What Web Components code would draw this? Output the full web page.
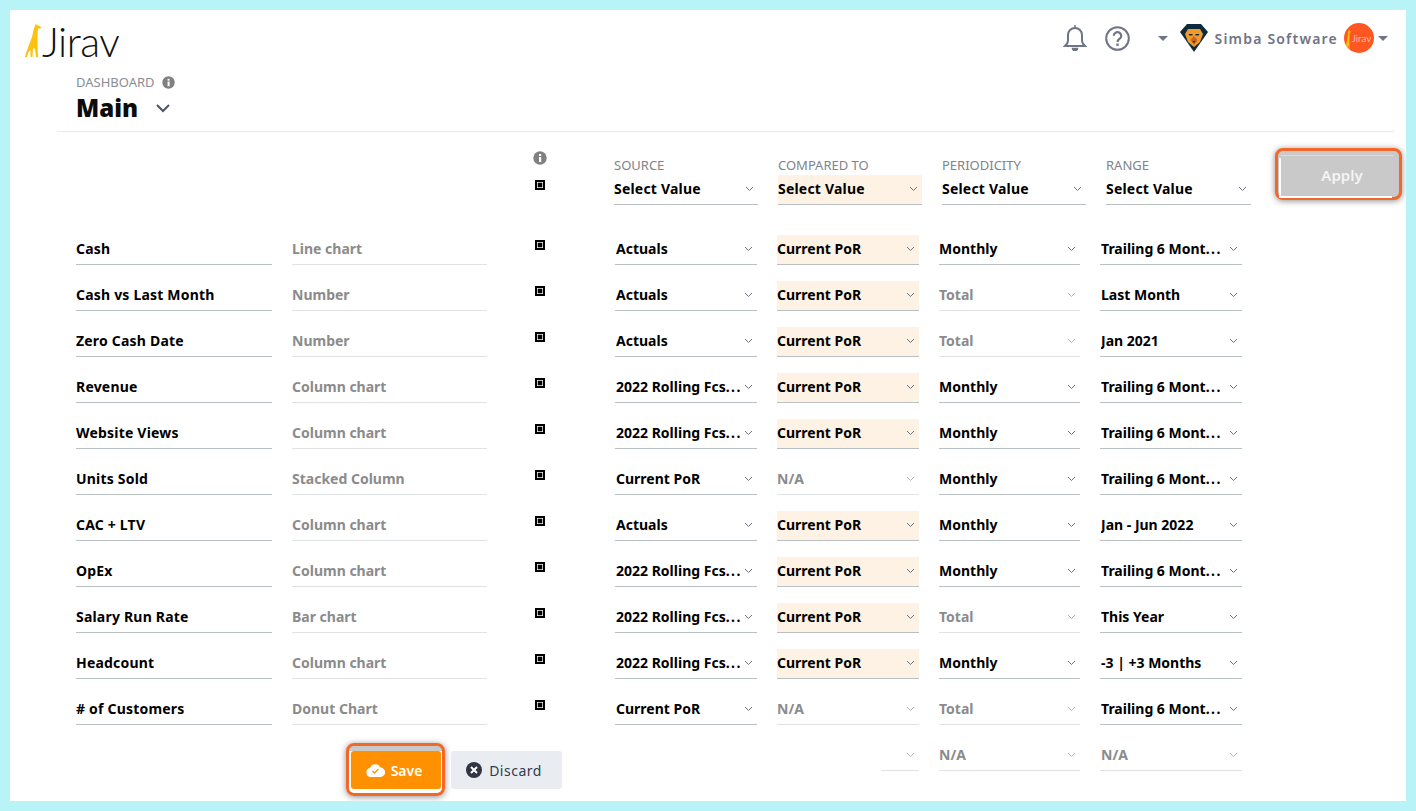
<!DOCTYPE html>
<html lang="en">
<head>
<meta charset="utf-8">
<title>Jirav Dashboard</title>
<style>
	html, body { margin: 0; padding: 0; background: #b8f3f7; }
	body { font-family: "Noto Sans", "Open Sans", sans-serif; height: 811px; overflow: hidden; }
</style>
</head>
<body>
<dash-app></dash-app>
<script>
const CHEVRON = `<svg width="9" height="6" viewBox="0 0 9 6" fill="none" stroke="currentColor" stroke-width="1"><path d="M1 1l3.5 3.5L8 1"/></svg>`;
const INFO = `<svg width="14" height="14" viewBox="0 0 14 14"><circle cx="7" cy="7" r="6.7" fill="#808080"/><rect x="6" y="6" width="2.2" height="5" fill="#fff"/><rect x="6" y="3" width="2.2" height="2" fill="#fff"/></svg>`;
const GIRAFFE = `M9 5l1-2V.5l1 2 1-2 .5 2H14l2.500 2-1 1H13l-.5 6.500V22l.5 12h-2l-1-8-2-1-.5 9h-2v-7L3 30l-1 4H0l1-4 3-8 3-8z`;

class DashCheck extends HTMLElement {
	constructor() {
		super();
		this.attachShadow({ mode: 'open' });
		this.shadowRoot.innerHTML = `
			<style>
				:host { display: block; width: 10px; height: 10px; }
				svg { display: block; }
			</style>
			<svg width="10" height="10" viewBox="0 0 10 10"><rect x="1" y="1" width="8" height="8" fill="#fff" stroke="#000" stroke-width="2"/><rect x="2.700" y="2.700" width="4.600" height="4.600" fill="#000"/></svg>`;
	}
}

class DashSelect extends HTMLElement {
	constructor() {
		super();
		this.attachShadow({ mode: 'open' });
	}

	connectedCallback() {
		this.shadowRoot.innerHTML = `
			<style>
				:host { display: flex; align-items: center; box-sizing: border-box; height: 30px; padding: 0 4px 2px 1px; border-bottom: 1px solid #b9c0c4; color: #000; font-size: 14px; font-weight: 700; }
				:host([tinted]) { background: #fdf2e4; padding-left: 0; }
				:host([disabled]) { color: #8b8b8b; border-bottom-color: #dfe3e5; }
				:host([flush]) { padding-left: 0; }
				span { flex: 1; white-space: nowrap; overflow: hidden; }
				svg { flex: none; color: #6b7280; }
				:host([disabled]) svg { color: #b5b8bb; }
			</style>
			<span><slot></slot></span>${CHEVRON}`;
	}
}

class DashField extends HTMLElement {
	constructor() {
		super();
		this.attachShadow({ mode: 'open' });
		this.shadowRoot.innerHTML = `
			<style>
				:host { display: flex; align-items: center; box-sizing: border-box; height: 30px; padding-bottom: 2px; border-bottom: 1px solid #b9c0c4; color: #000; font-size: 14px; font-weight: 700; letter-spacing: .2px; }
				:host([muted]) { color: #8b8b8b; border-bottom-color: #dfe3e5; letter-spacing: 0; }
			</style>
			<slot></slot>`;
	}
}

class DashRing extends HTMLElement {
	constructor() {
		super();
		this.attachShadow({ mode: 'open' });
		this.shadowRoot.innerHTML = `
			<style>
				:host { display: block; box-sizing: border-box; border: 3px solid #f2682a; border-radius: 8px; background: linear-gradient(#c9c9c9 0, #c9c9c9 5px, #fff 5px); box-shadow: 0 1px 6px rgba(0,0,0,.45); }
				:host([grey]) { background: #c9c9c9; }
			</style>
			<slot></slot>`;
	}
}

class DashButton extends HTMLElement {
	constructor() {
		super();
		this.attachShadow({ mode: 'open' });
		this.shadowRoot.innerHTML = `
			<style>
				:host { display: flex; align-items: center; justify-content: center; gap: 7px; box-sizing: border-box; height: 38px; border-radius: 3px; font-size: 14px; letter-spacing: .5px; background: #e9ecf0; color: #343a4e; }
				:host([variant="save"]) { background: #ff9100; color: #fff; font-weight: 600; width: 90px; gap: 6px; letter-spacing: 0; padding-right: 4px; }
				:host([variant="apply"]) { background: #c9c9c9; color: #f4f4f4; font-weight: 600; font-size: 15px; height: 40px; width: 113px; letter-spacing: 0; padding: 0 0 2px 9px; border-radius: 0; box-shadow: 0 -1px 0 #dcdcdc, -2px 2px 0 #fff; }
				:host([variant="discard"]) { width: 111px; padding-right: 5px; }
			</style>
			<slot name="icon"></slot><slot></slot>`;
	}
}

class DashTopbar extends HTMLElement {
	constructor() {
		super();
		this.attachShadow({ mode: 'open' });
		this.shadowRoot.innerHTML = `
			<style>
				:host { display: flex; align-items: flex-start; justify-content: space-between; height: 60px; padding: 0 18px 0 15px; box-sizing: border-box; }
				.logo { display: flex; align-items: flex-start; margin-top: 12px; }
				.logo svg { display: block; margin-top: 1px; }
				.logo span { font-family: Lato, sans-serif; font-weight: 300; font-size: 41px; line-height: 40px; color: #111; letter-spacing: -.5px; }
				.right { display: flex; align-items: center; height: 30px; margin-top: 13px; color: #6f7486; }
				.bell { margin-right: 18px; }
				.help { margin-right: 28px; }
				.caret { width: 0; height: 0; border-left: 5px solid transparent; border-right: 5px solid transparent; border-top: 5px solid #6f7486; }
				.lion { margin: 0 6px 0 12px; }
				.name { font-size: 14px; font-weight: 600; letter-spacing: 1.2px; white-space: nowrap; margin-right: 6px; }
				.avatar { display: flex; align-items: center; justify-content: center; width: 30px; height: 30px; border-radius: 50%; background: #ff5722; color: #ffe9e0; font-family: Lato, sans-serif; font-size: 10px; font-weight: 300; overflow: hidden; margin-right: 4px; }
				.avatar svg { margin: 4px 1px 0 -2px; }
			</style>
			<div class="logo">
				<svg width="17" height="34" viewBox="0 0 17 34" fill="#fdc20e"><path d="${GIRAFFE}"/></svg>
				<span>Jirav</span>
			</div>
			<div class="right">
				<svg class="bell" width="24" height="26" viewBox="0 0 24 26" fill="none" stroke="currentColor" stroke-width="2"><path d="M2 21h20c-2-2-3-3-3-5v-6a7 7 0 0 0-14 0v6c0 2-1 3-3 5z"/><path d="M12 0v3M9.500 23.500a2.500 2 0 0 0 5 0z" fill="currentColor" stroke-width="1.500"/></svg>
				<svg class="help" width="25" height="25" viewBox="0 0 25 25" fill="none" stroke="currentColor" stroke-width="2"><circle cx="12.500" cy="12.500" r="11.300"/><path d="M8.800 9.800a3.700 3.700 0 1 1 5.700 3.100c-1.400.9-2 1.500-2 3" stroke-width="2.200"/><rect x="11.300" y="17.500" width="2.400" height="2.400" fill="currentColor" stroke="none"/></svg>
				<div class="caret"></div>
				<svg class="lion" width="28" height="28" viewBox="0 0 28 28"><path d="M7 0h14l7 8-14 20L0 8z" fill="#0f2b3a"/><path d="M8 5h12l3 5-3 8-6 5-6-5-3-8z" fill="#f09a2e"/><path d="M14 12l-3.500 4 3.500 5 3.500-5z" fill="#c9661d"/><path d="M8.500 10h4v1.500h-3zM15.500 10h4l-1 1.500h-3z" fill="#0f2b3a"/><path d="M12.500 17h3L14 19z" fill="#0f2b3a"/></svg>
				<span class="name">Simba Software</span>
				<div class="avatar"><svg width="6" height="22" viewBox="0 0 17 34" fill="#fdc20e" preserveAspectRatio="none"><path d="${GIRAFFE}"/></svg>Jirav</div>
				<div class="caret"></div>
			</div>`;
	}
}

class DashTitle extends HTMLElement {
	constructor() {
		super();
		this.attachShadow({ mode: 'open' });
		this.shadowRoot.innerHTML = `
			<style>
				:host { display: block; margin-left: 47px; margin-right: 12px; padding: 3px 0 8px 19px; border-bottom: 1px solid #e9e9e9; }
				.eyebrow { display: flex; align-items: center; gap: 7px; height: 18px; font-size: 13px; color: #8a8d93; }
				.eyebrow svg { display: block; width: 13px; height: 13px; }
				.main { display: flex; align-items: center; height: 32px; gap: 18px; font-size: 24px; font-weight: 900; color: #0c0c0c; }
				.main svg { color: #4b5563; margin-top: 2px; }
			</style>
			<div class="eyebrow">DASHBOARD ${INFO}</div>
			<div class="main">Main <svg width="14" height="9" viewBox="0 0 14 9" fill="none" stroke="currentColor" stroke-width="2"><path d="M1 1l6 6 6-6"/></svg></div>`;
	}
}

class DashFilters extends HTMLElement {
	constructor() {
		super();
		this.attachShadow({ mode: 'open' });
		const col = (label, tinted) => `
			<div class="col">
				<div class="label">${label}</div>
				<dash-select flush ${tinted ? 'tinted' : ''}>Select Value</dash-select>
			</div>`;
		this.shadowRoot.innerHTML = `
			<style>
				:host { display: grid; grid-template-columns: 437px 14px 27px 144px 144px 144px 145px 131px; column-gap: 20px; align-items: start; padding: 16px 0 30px 66px; }
				.flag { display: flex; flex-direction: column; align-items: center; gap: 15px; margin-top: 3px; }
				.flag svg { display: block; }
				.col { margin-top: 8px; letter-spacing: .2px; }
				.label { height: 19px; line-height: 19px; font-size: 13px; color: #7f838a; letter-spacing: 0; }
				dash-ring { margin-left: 4px; width: 127px; height: 52px; padding: 5px 5px 0 3px; }
			</style>
			<div></div>
			<div class="flag">${INFO}<dash-check></dash-check></div>
			<div></div>
			${col('SOURCE')}${col('COMPARED TO', true)}${col('PERIODICITY')}${col('RANGE')}
			<dash-ring grey><dash-button variant="apply">Apply</dash-button></dash-ring>`;
	}
}

class DashRow extends HTMLElement {
	constructor() {
		super();
		this.attachShadow({ mode: 'open' });
		this.shadowRoot.innerHTML = `
			<style>
				:host { display: grid; grid-template-columns: 196px 195px 88px 142px 142px 141px 142px; column-gap: 20px; height: 30px; }
				::slotted(*) { min-width: 0; }
			</style>
			<slot></slot>`;
	}
}

class DashTable extends HTMLElement {
	constructor() {
		super();
		this.attachShadow({ mode: 'open' });
	}

	connectedCallback() {
		const rows = [
			['Cash', 'Line chart', 'Actuals', 'Current PoR', 'Monthly', 'Trailing 6 Mont...'],
			['Cash vs Last Month', 'Number', 'Actuals', 'Current PoR', '-Total', 'Last Month'],
			['Zero Cash Date', 'Number', 'Actuals', 'Current PoR', '-Total', 'Jan 2021'],
			['Revenue', 'Column chart', '2022 Rolling Fcs...', 'Current PoR', 'Monthly', 'Trailing 6 Mont...'],
			['Website Views', 'Column chart', '2022 Rolling Fcs...', 'Current PoR', 'Monthly', 'Trailing 6 Mont...'],
			['Units Sold', 'Stacked Column', 'Current PoR', '-N/A', 'Monthly', 'Trailing 6 Mont...'],
			['CAC + LTV', 'Column chart', 'Actuals', 'Current PoR', 'Monthly', 'Jan - Jun 2022'],
			['OpEx', 'Column chart', '2022 Rolling Fcs...', 'Current PoR', 'Monthly', 'Trailing 6 Mont...'],
			['Salary Run Rate', 'Bar chart', '2022 Rolling Fcs...', 'Current PoR', '-Total', 'This Year'],
			['Headcount', 'Column chart', '2022 Rolling Fcs...', 'Current PoR', 'Monthly', '-3 | +3 Months'],
			['# of Customers', 'Donut Chart', 'Current PoR', '-N/A', '-Total', 'Trailing 6 Mont...'],
		];
		// a leading "-" marks a disabled value, "-3 | +3 Months" is a real value
		const sel = (v, extra = '') => {
			const off = v.startsWith('-') && !v.startsWith('-3');
			const text = (off ? v.slice(1) : v).replace('...', '<span class="dots">...</span>');
			return `<dash-select ${extra} ${off ? 'disabled' : ''}>${text}</dash-select>`;
		};
		const row = r => `
			<dash-row>
				<dash-field>${r[0]}</dash-field>
				<dash-field muted>${r[1]}</dash-field>
				<div class="chk"><dash-check></dash-check></div>
				${sel(r[2])}
				${sel(r[3], 'flush ' + (r[3].startsWith('-') ? '' : 'tinted'))}
				${sel(r[4], 'flush')}
				${sel(r[5])}
			</dash-row>`;
		this.shadowRoot.innerHTML = `
			<style>
				:host { display: flex; flex-direction: column; gap: 16px; padding-left: 66px; }
				.chk { padding: 5px 0 0 28px; }
				.dots { letter-spacing: 1.5px; }
				.stub { grid-column: 5; width: 38px; justify-self: end; }
				.actions { grid-column: 1 / 4; display: flex; align-items: flex-start; gap: 5px; margin: 2px 0 0 270px; }
				.actions dash-ring { width: 99px; height: 53px; padding: 5px 2px 0 2px; }
				.actions dash-button[variant="discard"] { margin-top: 8px; margin-left: 1px; }
				dash-button svg { display: block; }
			</style>
			${rows.map(row).join('')}
			<dash-row>
				<div class="actions">
					<dash-ring>
						<dash-button variant="save">
							<svg slot="icon" width="19" height="14" viewBox="0 0 19 14"><path d="M5 14a4.500 4.500 0 0 1-1-8.900A5.500 5.500 0 0 1 14.300 4.600 4.700 4.700 0 0 1 14.500 14z" fill="#fff"/><path d="M6.500 8l2 2 4-4" fill="none" stroke="#ff9100" stroke-width="1.300"/></svg>
							Save
						</dash-button>
					</dash-ring>
					<dash-button variant="discard">
						<svg slot="icon" width="16" height="16" viewBox="0 0 16 16"><circle cx="8" cy="8" r="8" fill="#2f3542"/><path d="M5 5l6 6M11 5l-6 6" stroke="#fff" stroke-width="2"/></svg>
						Discard
					</dash-button>
				</div>
				<dash-select class="stub" disabled flush></dash-select>
				${sel('-N/A', 'flush')}
				${sel('-N/A')}
			</dash-row>`;
	}
}

class DashApp extends HTMLElement {
	constructor() {
		super();
		this.attachShadow({ mode: 'open' });
		this.shadowRoot.innerHTML = `
			<style>
				:host { display: block; box-sizing: border-box; margin: 10px; width: 1396px; height: 791px; background: #fff; overflow: hidden; color: #000; }
			</style>
			<dash-topbar></dash-topbar>
			<dash-title></dash-title>
			<dash-filters></dash-filters>
			<dash-table></dash-table>`;
	}
}

customElements.define('dash-check', DashCheck);
customElements.define('dash-select', DashSelect);
customElements.define('dash-field', DashField);
customElements.define('dash-ring', DashRing);
customElements.define('dash-button', DashButton);
customElements.define('dash-topbar', DashTopbar);
customElements.define('dash-title', DashTitle);
customElements.define('dash-filters', DashFilters);
customElements.define('dash-row', DashRow);
customElements.define('dash-table', DashTable);
customElements.define('dash-app', DashApp);
</script>
</body>
</html>
